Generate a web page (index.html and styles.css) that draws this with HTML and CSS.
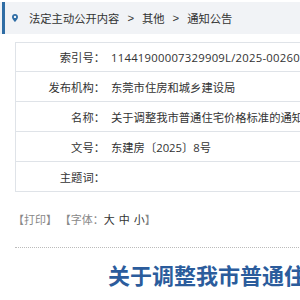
FILE: index.html
```html
<!DOCTYPE html>
<html lang="zh-CN">
<head>
    <meta charset="UTF-8">
    <meta name="viewport" content="width=device-width, initial-scale=1.0">
    <title>关于调整我市普通住宅价格标准的通知</title>
    <link rel="stylesheet" href="styles.css">
</head>
<body>
    <div class="crumb">
        <div class="crumb-inner">
            <svg class="pin" width="6" height="8" viewBox="0 0 6 8">
                <path d="M3 0C1.3 0 0 1.3 0 2.9 0 5 3 8 3 8s3-3 3-5.1C6 1.3 4.7 0 3 0zm0 4.1a1.2 1.2 0 1 1 0-2.4 1.2 1.2 0 0 1 0 2.4z" fill="#2f6da5"/>
            </svg>
            <span>法定主动公开内容</span>
            <span class="sep">&gt;</span>
            <span>其他</span>
            <span class="sep">&gt;</span>
            <span>通知公告</span>
        </div>
    </div>

    <div class="page">
        <div class="meta">
            <div class="row"><div class="label">索引号：</div><div class="value code">11441900007329909L/2025-00260</div></div>
            <div class="row"><div class="label">发布机构：</div><div class="value">东莞市住房和城乡建设局</div></div>
            <div class="row"><div class="label">名称：</div><div class="value">关于调整我市普通住宅价格标准的通知</div></div>
            <div class="row"><div class="label">文号：</div><div class="value">东建房〔2025〕8号</div></div>
            <div class="row"><div class="label">主题词：</div><div class="value"></div></div>
        </div>

        <div class="tools">【打印】 【字体：<span class="size">大</span><span class="size">中</span><span class="size">小</span>】</div>

        <h1 class="title">关于调整我市普通住宅价格标准的通知</h1>
    </div>
</body>
</html>
```

FILE: styles.css
```css
body {
    margin: 0;
    overflow: hidden;
    font-family: "Open Sans", "Noto Sans CJK SC", sans-serif;
    font-size: 11.3px;
    color: #333;
    background: #fff;
}

.crumb {
    margin-top: 2px;
    padding-left: 2px;
    background: #f1f3f6;
}

.crumb-inner {
    height: 32px;
    border-left: 3px solid #2f6da5;
    display: flex;
    align-items: center;
    padding-left: 7px;
    white-space: nowrap;
}

.pin {
    margin-right: 11px;
}

.sep {
    margin: 0 8px;
    font-family: "Liberation Sans", sans-serif;
}

.page {
    width: 560px;
    margin: 8px 0 0 15px;
}

.meta {
    border: 1px solid #dfe3e8;
}

.row {
    display: flex;
    height: 29px;
    align-items: center;
    border-top: 1px solid #dfe3e8;
    white-space: nowrap;
}

.row:first-child {
    border-top: none;
    height: 28px;
}

.label {
    width: 89px;
    text-align: right;
}

.value {
    padding-left: 6px;
}

.code {
    letter-spacing: 0.25px;
}

.tools {
    margin-top: 19px;
    text-indent: -2px;
    padding-bottom: 20px;
    border-bottom: 1px dotted #bbb;
    color: #888;
    font-size: 11px;
}

.size {
    color: #333;
    margin-left: 4px;
}

.size:first-child {
    margin-left: 0;
}

.title {
    margin: 10px 0 0;
    text-align: center;
    white-space: nowrap;
    font-size: 22px;
    line-height: 34px;
    font-weight: bold;
    color: #2b5c9c;
}
```
